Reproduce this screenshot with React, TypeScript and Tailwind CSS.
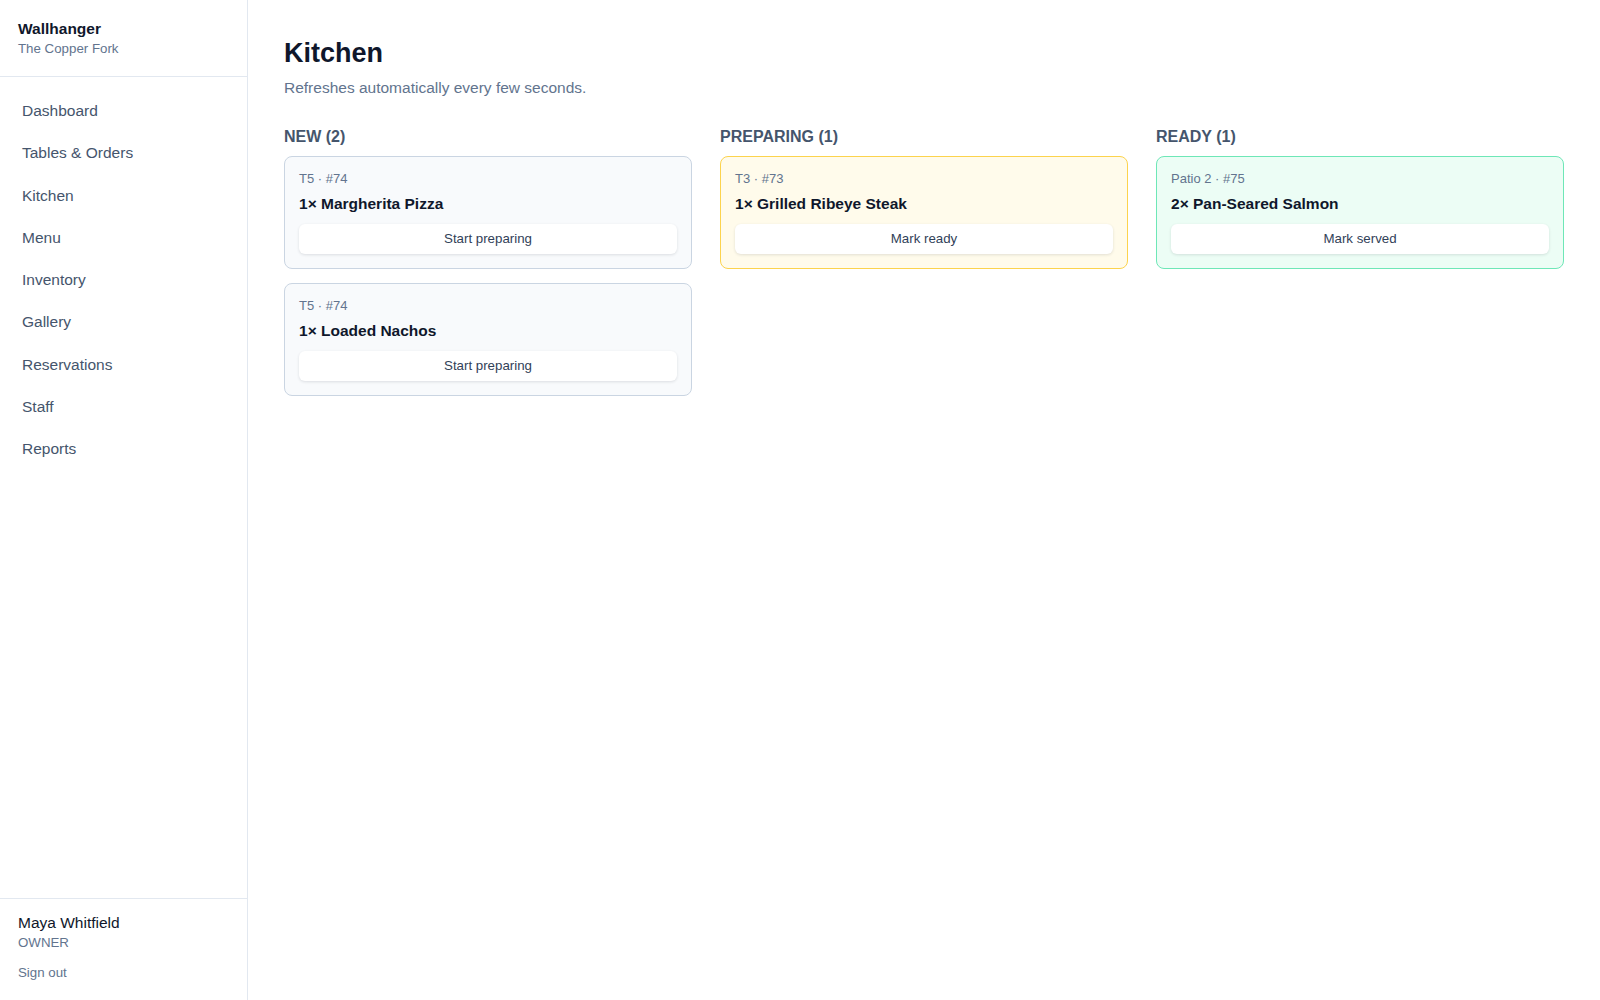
const nav = [
  "Dashboard",
  "Tables & Orders",
  "Kitchen",
  "Menu",
  "Inventory",
  "Gallery",
  "Reservations",
  "Staff",
  "Reports",
];

type Ticket = { where: string; order: number; qty: number; item: string };

const columns: {
  title: string;
  action: string;
  card: string;
  tickets: Ticket[];
}[] = [
  {
    title: "New",
    action: "Start preparing",
    card: "bg-slate-50 border-slate-300",
    tickets: [
      { where: "T5", order: 74, qty: 1, item: "Margherita Pizza" },
      { where: "T5", order: 74, qty: 1, item: "Loaded Nachos" },
    ],
  },
  {
    title: "Preparing",
    action: "Mark ready",
    card: "bg-[#fffbeb] border-[#fcd34d]",
    tickets: [{ where: "T3", order: 73, qty: 1, item: "Grilled Ribeye Steak" }],
  },
  {
    title: "Ready",
    action: "Mark served",
    card: "bg-[#ecfdf5] border-[#6ee7b7]",
    tickets: [{ where: "Patio 2", order: 75, qty: 2, item: "Pan-Seared Salmon" }],
  },
];

export default function App() {
  return (
    <div className="flex min-h-screen h-screen bg-white text-slate-900 font-['Liberation_Sans',Arial,sans-serif]">
      {/* Sidebar */}
      <aside className="w-[248px] shrink-0 flex flex-col border-r border-slate-200">
        <div className="px-[18px] pt-[19px] pb-[17px] border-b border-slate-200">
          <p className="text-[15.5px] leading-5 font-bold text-slate-900">Wallhanger</p>
          <p className="text-[13.3px] leading-5 text-slate-500">The Copper Fork</p>
        </div>
        <nav className="flex flex-col px-2.5 pt-[13px]">
          {nav.map((n) => (
            <a
              key={n}
              className="px-3 py-[9.125px] text-[15.5px] leading-6 text-slate-600 rounded-md cursor-pointer hover:bg-slate-100"
            >
              {n}
            </a>
          ))}
        </nav>
        <div className="mt-auto border-t border-slate-200 px-[18px] pt-3 pb-[15px]">
          <p className="text-[15.5px] leading-6 text-slate-900">Maya Whitfield</p>
          <p className="text-[13.3px] leading-4 text-slate-500">OWNER</p>
          <p className="mt-2.5 text-[13.3px] leading-6 text-slate-500 cursor-pointer">Sign out</p>
        </div>
      </aside>

      {/* Main */}
      <main className="flex-1 px-9 pt-[35px]">
        <h1 className="text-[27px] leading-9 font-bold text-slate-900">Kitchen</h1>
        <p className="mt-[5px] text-[15.5px] leading-6 text-slate-500">
          Refreshes automatically every few seconds.
        </p>

        <div className="mt-[27px] grid grid-cols-3 gap-7 items-start">
          {columns.map((col) => (
            <section key={col.title}>
              <h2 className="text-base leading-5 font-bold uppercase text-slate-600">
                {col.title} ({col.tickets.length})
              </h2>
              <div className="mt-[9px] flex flex-col gap-3.5">
                {col.tickets.map((t, i) => (
                  <div key={i} className={`rounded-lg border px-3.5 pt-3.5 pb-3.5 ${col.card}`}>
                    <p className="text-[13px] leading-4 text-slate-500">
                      {t.where} · #{t.order}
                    </p>
                    <p className="mt-[5px] text-[15.5px] leading-6 font-bold text-slate-900">
                      {t.qty}× {t.item}
                    </p>
                    <button className="mt-2 w-full h-[30px] rounded-md bg-white text-[13.3px] text-slate-700 shadow-[0_1px_3px_rgba(15,23,42,0.12)]">
                      {col.action}
                    </button>
                  </div>
                ))}
              </div>
            </section>
          ))}
        </div>
      </main>
    </div>
  );
}
